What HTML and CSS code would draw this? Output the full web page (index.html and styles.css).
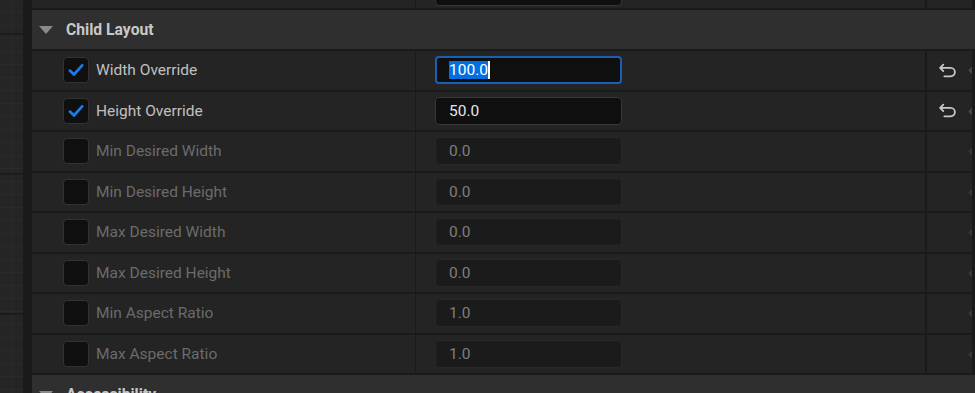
FILE: index.html
```html
<!DOCTYPE html>
<html>
<head>
  <title>Details</title>
  <link rel="stylesheet" href="styles.css">
</head>
<body>
  <div class="editor">
    <div class="graph"></div>
    <div class="splitter"></div>
    <div class="details">
      <div class="row row-cut">
        <div class="name"></div>
        <div class="value"><div class="field"></div></div>
        <div class="extra"></div>
      </div>

      <div class="category">
        <span class="arrow"></span>
        <span>Child Layout</span>
      </div>

      <div class="row">
        <div class="name">
          <span class="check on"><svg viewBox="0 0 16 16"><path d="M2.5 8.5 L6.2 12 L13.5 3.8"/></svg></span>
          <span class="label">Width Override</span>
        </div>
        <div class="value"><div class="field focus"><span class="sel">100.0</span><span class="caret"></span></div></div>
        <div class="extra"><svg class="reset" viewBox="0 0 18 14"><path d="M5 1.5 L2 4.5 L5 7.5 M2 4.5 H12 A4 4 0 0 1 12 12.5 H6"/></svg><span class="key"></span></div>
      </div>

      <div class="row">
        <div class="name">
          <span class="check on"><svg viewBox="0 0 16 16"><path d="M2.5 8.5 L6.2 12 L13.5 3.8"/></svg></span>
          <span class="label">Height Override</span>
        </div>
        <div class="value"><div class="field">50.0</div></div>
        <div class="extra"><svg class="reset" viewBox="0 0 18 14"><path d="M5 1.5 L2 4.5 L5 7.5 M2 4.5 H12 A4 4 0 0 1 12 12.5 H6"/></svg><span class="key"></span></div>
      </div>

      <div class="row off">
        <div class="name"><span class="check"></span><span class="label">Min Desired Width</span></div>
        <div class="value"><div class="field">0.0</div></div>
        <div class="extra"><span class="key"></span></div>
      </div>

      <div class="row off">
        <div class="name"><span class="check"></span><span class="label">Min Desired Height</span></div>
        <div class="value"><div class="field">0.0</div></div>
        <div class="extra"><span class="key"></span></div>
      </div>

      <div class="row off">
        <div class="name"><span class="check"></span><span class="label">Max Desired Width</span></div>
        <div class="value"><div class="field">0.0</div></div>
        <div class="extra"><span class="key"></span></div>
      </div>

      <div class="row off">
        <div class="name"><span class="check"></span><span class="label">Max Desired Height</span></div>
        <div class="value"><div class="field">0.0</div></div>
        <div class="extra"><span class="key"></span></div>
      </div>

      <div class="row off">
        <div class="name"><span class="check"></span><span class="label">Min Aspect Ratio</span></div>
        <div class="value"><div class="field">1.0</div></div>
        <div class="extra"><span class="key"></span></div>
      </div>

      <div class="row off">
        <div class="name"><span class="check"></span><span class="label">Max Aspect Ratio</span></div>
        <div class="value"><div class="field">1.0</div></div>
        <div class="extra"><span class="key"></span></div>
      </div>

      <div class="category">
        <span class="arrow"></span>
        <span>Accessibility</span>
      </div>
    </div>
  </div>
</body>
</html>
```

FILE: styles.css
```css
html, body {
  margin: 0;
  height: 100%;
  overflow: hidden;
}

body {
  font-family: Roboto, "Liberation Sans", sans-serif;
  font-size: 15.5px;
  background-color: #1a1a1a;
  color: #c0c0c0;
}

.editor {
  display: flex;
  height: 393px;
}

.graph {
  width: 23px;
  background-color: #252525;
  background-image:
    repeating-linear-gradient(to bottom, transparent 0, transparent 33px, #1c1c1c 33px, #1c1c1c 35px, transparent 35px, transparent 140px),
    repeating-linear-gradient(to bottom, transparent 0, transparent 12px, #2a2a2a 12px, #2a2a2a 13px),
    repeating-linear-gradient(to right, transparent 0, transparent 12px, #2a2a2a 12px, #2a2a2a 13px);
}

.splitter {
  width: 9px;
  background-color: #1a1a1a;
}

.details {
  flex: 1;
  display: flex;
  flex-direction: column;
  gap: 2px;
  background-color: #1a1a1a;
  overflow: hidden;
}

.row {
  display: grid;
  grid-template-columns: 384px 511px 45px;
  height: 38.5px;
  flex-shrink: 0;
}

.row-cut {
  height: 8px;
}

.row-cut .field {
  margin-top: -25px;
}

.name,
.value,
.extra {
  background-color: #242424;
  display: flex;
  align-items: center;
}

.name {
  border-right: 1px solid #1a1a1a;
  padding-left: 31px;
}

.value {
  padding-left: 19px;
  border-right: 2px solid #1a1a1a;
}

.extra {
  position: relative;
  overflow: hidden;
}

.check {
  width: 24px;
  height: 24px;
  border: 1px solid #333;
  border-radius: 4px;
  background-color: #0f0f0f;
  display: flex;
  align-items: center;
  justify-content: center;
  margin-right: 7px;
}

.check svg {
  width: 18px;
  height: 18px;
  fill: none;
  stroke: #1f7ae8;
  stroke-width: 2.4;
  stroke-linecap: round;
  stroke-linejoin: round;
}

.label {
  color: #c0c0c0;
}

.field {
  box-sizing: border-box;
  width: 187px;
  height: 28px;
  border: 1px solid #363636;
  border-radius: 4px;
  background-color: #0f0f0f;
  color: #e6e6e6;
  padding-left: 13px;
  display: flex;
  align-items: center;
}

.field.focus {
  border: 2px solid #1a5fb2;
  padding-left: 12px;
}

.sel {
  background-color: #0070e0;
  color: #fff;
  line-height: 18px;
}

.caret {
  width: 2px;
  height: 18px;
  background-color: #fff;
}

.off .label {
  color: #6b6b6b;
}

.off .field {
  background-color: #1b1b1b;
  border-color: #282828;
  color: #7e7e7e;
}

.reset {
  width: 19px;
  height: 15px;
  margin-left: 11px;
  fill: none;
  stroke: #c8c8c8;
  stroke-width: 1.7;
  stroke-linecap: round;
  stroke-linejoin: round;
}

.key {
  position: absolute;
  left: 44px;
  top: 50%;
  width: 9px;
  height: 9px;
  margin-top: -6px;
  border: 2px solid #4a4a4a;
  transform: rotate(45deg);
}

.off .key {
  border-color: #3a3a3a;
}

.category {
  height: 39px;
  flex-shrink: 0;
  background-color: #2f2f2f;
  display: flex;
  align-items: center;
  font-weight: bold;
  font-size: 15.7px;
  color: #c8c8c8;
}

.arrow {
  width: 0;
  height: 0;
  border-left: 7px solid transparent;
  border-right: 7px solid transparent;
  border-top: 8px solid #8a8a8a;
  margin-left: 7px;
  margin-right: 13px;
}
```
